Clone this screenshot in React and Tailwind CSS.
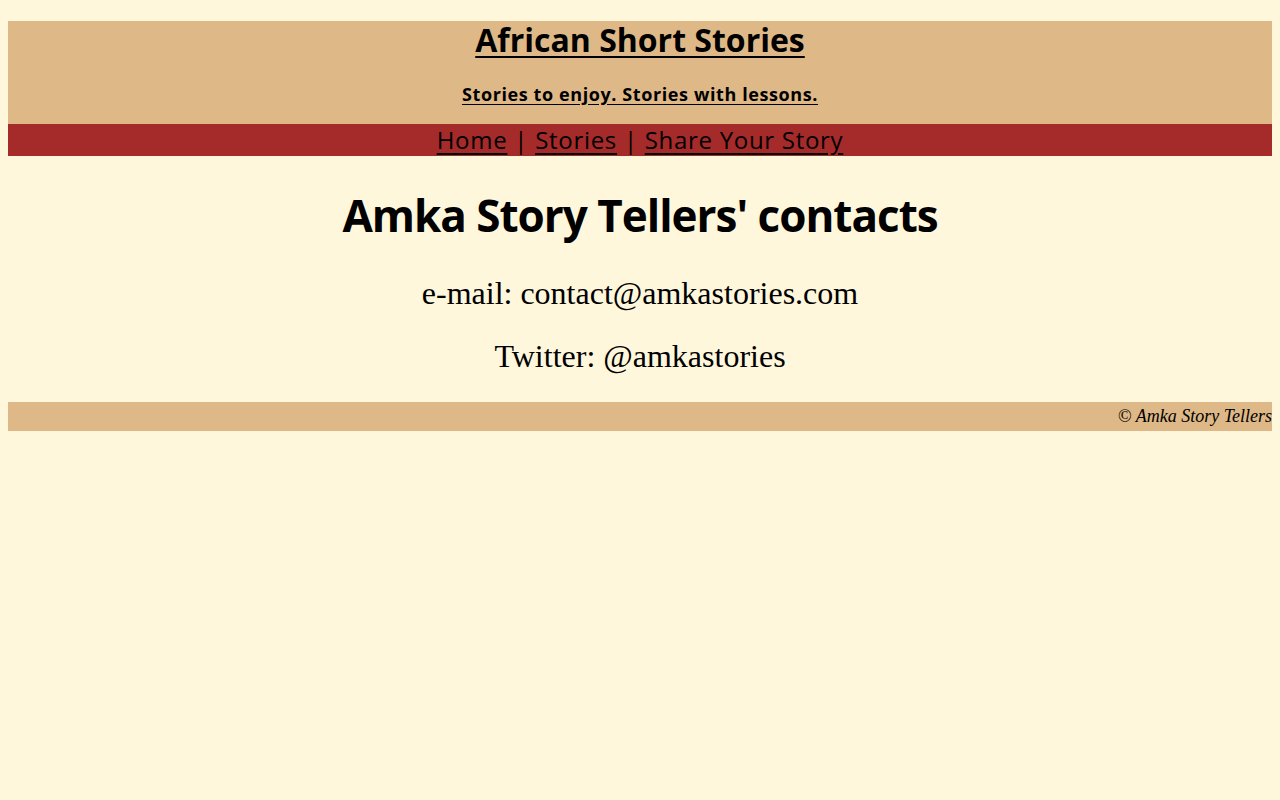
export default function App() {
  const sans = { fontFamily: '"Open Sans", "Noto Sans", sans-serif' };
  const serif = { fontFamily: '"Liberation Serif", serif' };
  return (
    <div className="min-h-[800px] bg-[#fff7dc] p-2 text-black">
      <header className="mt-[13px] bg-[#deb887] pb-[19px] text-center" style={sans}>
        <h1 className="text-[32px] font-bold leading-[38px] underline decoration-2 underline-offset-[4px]">
          African Short Stories
        </h1>
        <h3 className="mt-[24px] text-[18px] font-bold leading-[22px] tracking-[0.6px] underline underline-offset-[3px]">
          Stories to enjoy. Stories with lessons.
        </h3>
      </header>
      <nav className="bg-[#a52a2a] text-center text-[24px] leading-[32px] tracking-[0.7px]" style={sans}>
        <a className="underline underline-offset-[4px]">Home</a>
        <span> | </span>
        <a className="underline underline-offset-[4px]">Stories</a>
        <span> | </span>
        <a className="underline underline-offset-[4px]">Share Your Story</a>
      </nav>
      <main className="text-center">
        <h2 className="mt-[31px] text-[44px] font-bold leading-[56px] tracking-[-1px]" style={sans}>
          Amka Story Tellers' contacts
        </h2>
        <p className="mt-[32px] text-[32px] leading-[36px]" style={serif}>
          e-mail: contact@amkastories.com
        </p>
        <p className="mt-[27px] text-[32px] leading-[36px]" style={serif}>
          Twitter: @amkastories
        </p>
      </main>
      <footer className="mt-[28px] h-[29px] bg-[#deb887] text-right text-[18px] italic leading-[29px]" style={serif}>
        © Amka Story Tellers
      </footer>
    </div>
  );
}
